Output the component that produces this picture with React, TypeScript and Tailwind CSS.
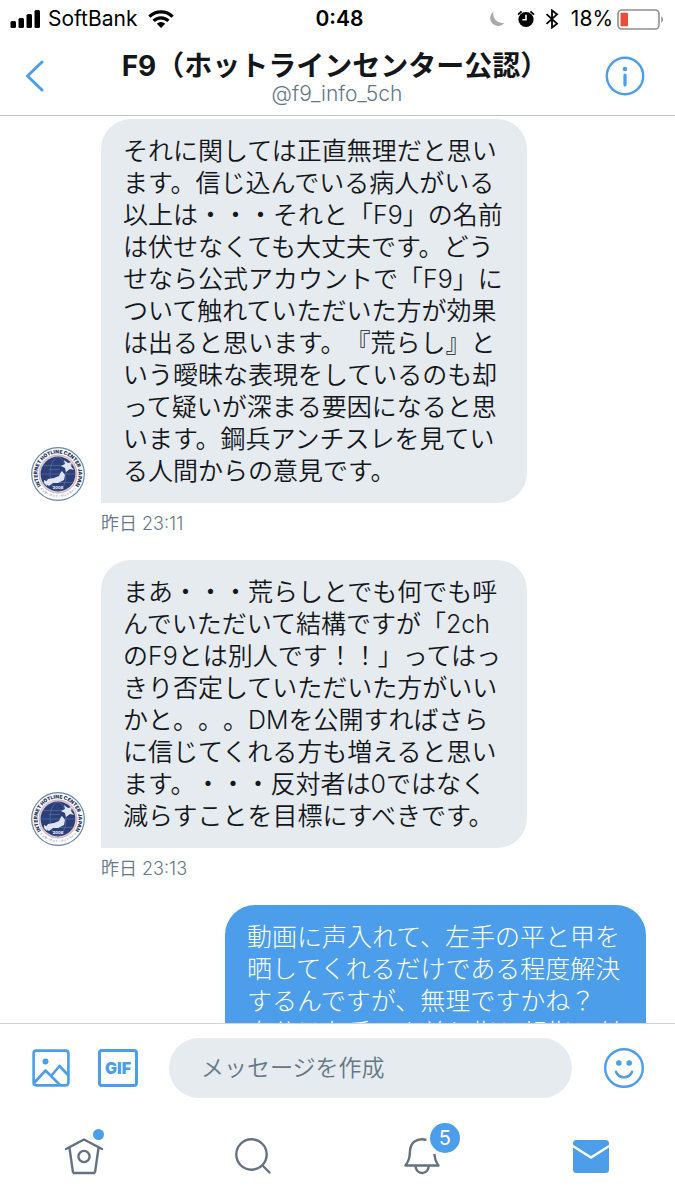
import { useId, useState } from "react";

type Message = {
  id: number;
  mine?: boolean;
  lines: string[];
  time: string;
};

const messages: Message[] = [
  {
    id: 1,
    lines: [
      "それに関しては正直無理だと思い",
      "ます。信じ込んでいる病人がいる",
      "以上は・・・それと「F9」の名前",
      "は伏せなくても大丈夫です。どう",
      "せなら公式アカウントで「F9」に",
      "ついて触れていただいた方が効果",
      "は出ると思います。『荒らし』と",
      "いう曖昧な表現をしているのも却",
      "って疑いが深まる要因になると思",
      "います。鋼兵アンチスレを見てい",
      "る人間からの意見です。",
    ],
    time: "昨日 23:11",
  },
  {
    id: 2,
    lines: [
      "まあ・・・荒らしとでも何でも呼",
      "んでいただいて結構ですが「2ch",
      "のF9とは別人です！！」ってはっ",
      "きり否定していただいた方がいい",
      "かと。。。DMを公開すればさら",
      "に信じてくれる方も増えると思い",
      "ます。・・・反対者は0ではなく",
      "減らすことを目標にすべきです。",
    ],
    time: "昨日 23:13",
  },
  {
    id: 3,
    mine: true,
    lines: [
      "動画に声入れて、左手の平と甲を",
      "晒してくれるだけである程度解決",
      "するんですが、無理ですかね？",
      "自分は左手の人差し指と親指の付",
    ],
    time: "昨日 23:15",
  },
];

const StatusBar = () => (
  <div className="grid h-9 shrink-0 grid-cols-[1fr_auto_1fr] items-center px-[10px] pt-[2px] text-black">
    <div className="flex items-center gap-[7px]">
      <svg className="h-[18px] w-[31px]" viewBox="0 0 31 18" fill="currentColor">
        <rect x="0.5" y="11" width="5.5" height="7" rx="1.5" />
        <rect x="8.5" y="8" width="5.5" height="10" rx="1.5" />
        <rect x="16.5" y="4" width="5.5" height="14" rx="1.5" />
        <rect x="24.5" y="0" width="5.5" height="18" rx="1.5" />
      </svg>
      <span className="text-[21px] leading-6">SoftBank</span>
      <svg className="ml-1 h-[18px] w-[26px]" viewBox="0 0 26 18">
        <g fill="none" stroke="currentColor" strokeWidth="3.2">
          <path d="M1.4 6.6a16.4 16.4 0 0 1 23.2 0" />
          <path d="M5.6 10.9a10.4 10.4 0 0 1 14.8 0" />
        </g>
        <path d="M13 18l-4.2-4.3a6 6 0 0 1 8.4 0z" fill="currentColor" />
      </svg>
    </div>
    <span className="pl-1 text-[21px] leading-6 font-semibold">0:48</span>
    <div className="flex items-center justify-end">
      <svg className="mr-3 h-4 w-4" viewBox="0 0 16 16" fill="#aaaaaa">
        <path d="M4.6 0.4a9 9 0 0 0 11 11.3A8 8 0 1 1 4.6 0.4z" />
      </svg>
      <svg className="mr-[10px] h-[18px] w-[18px]" viewBox="0 0 18 18">
        <circle cx="9" cy="9.5" r="7.6" />
        <path d="M1 4.6L4.6 1.4M17 4.6L13.4 1.4" stroke="#000" strokeWidth="1.8" />
        <path d="M9 4.8v5H5.4" fill="none" stroke="#fff" strokeWidth="1.6" />
      </svg>
      <svg className="mr-3 h-5 w-[14px]" viewBox="0 0 14 20" fill="none" stroke="#000" strokeWidth="1.8">
        <path d="M1.5 5.2L12 14.6L7 18.6V1.4L12 5.4L1.5 14.8" />
      </svg>
      <span className="mr-1 text-[21px] leading-6">18%</span>
      <svg className="h-[21px] w-12" viewBox="0 0 48 21">
        <rect x="1" y="1" width="41" height="19" rx="4" fill="none" stroke="#8e8e8e" strokeWidth="1.6" />
        <rect x="3.5" y="3.8" width="7.5" height="13.4" rx="1" fill="#f04b37" />
        <path d="M44.3 7.2a4 4 0 0 1 0 6.6z" fill="#8e8e8e" />
      </svg>
    </div>
  </div>
);

const ChatHeader = () => (
  <header className="grid h-20 shrink-0 grid-cols-[1fr_auto_1fr] items-center border-b border-[#b9c3cc] pr-[30px] pl-[25px]">
    <button type="button" aria-label="戻る" className="w-5 text-[#4c9eeb]">
      <svg className="h-8 w-5" viewBox="0 0 20 32" fill="none" stroke="currentColor" strokeWidth="3" strokeLinecap="round" strokeLinejoin="round">
        <path d="M17 2L2.5 16L17 30" />
      </svg>
    </button>
    <div className="pt-1 text-center">
      <h1 className="text-[28px] leading-8 font-bold whitespace-nowrap text-[#14171a]">
        F9（ホットラインセンター公認）
      </h1>
      <p className="pl-1 text-[21px] leading-6 font-[350] text-[#657786]">@f9_info_5ch</p>
    </div>
    <button type="button" aria-label="情報" className="justify-self-end text-[#4c9eeb]">
      <svg className="h-10 w-10" viewBox="0 0 40 40" fill="none" stroke="currentColor">
        <circle cx="20" cy="20" r="18.2" strokeWidth="2.4" />
        <circle cx="20" cy="13" r="2.3" fill="currentColor" stroke="none" />
        <path d="M20 19v10" strokeWidth="3.2" strokeLinecap="round" />
      </svg>
    </button>
  </header>
);

const Avatar = () => {
  const id = useId();

  return (
    <svg className="mb-[2px] h-[54px] w-[54px] shrink-0 overflow-visible" viewBox="0 0 54 54" role="img" aria-label="F9">
      <defs>
        <path id={`${id}-top`} d="M11 40A20.6 20.6 0 1 1 43 40" />
        <path id={`${id}-bottom`} d="M7 39.5A24 24 0 0 0 47 39.5" />
      </defs>
      <circle cx="27" cy="27" r="26.3" fill="#fdfdfe" stroke="#6d84a3" strokeWidth="1.2" />
      <circle cx="27" cy="27" r="19" fill="#e9cfd6" stroke="#b9a3b8" strokeWidth="0.8" />
      <circle cx="27" cy="27" r="17.4" fill="#2b4079" />
      <g fill="none" stroke="#5a6fa3" strokeWidth="0.7">
        <ellipse cx="27" cy="27" rx="8" ry="17" />
        <path d="M10 27h34M12.5 18.5h29M12.5 35.5h29M18 22.5h11" />
      </g>
      <g fill="#dfe6f1">
        <path d="M33 13l4 3 4-1-1 4 3 4-4-1-4 3-1-4-4-2 4-2z" />
        <path d="M31 24l3 4-1 5-6 3-5 0-4 3-4-3 3-4 6-1 5-2 2-4z" />
        <path d="M13 33l4 2-1 4-3-3z" />
      </g>
      <text fill="#fff" fontSize="4" fontWeight="700" x="27" y="42" textAnchor="middle">
        2006
      </text>
      <text fill="#29375e" fontSize="5" fontWeight="900">
        <textPath href={`#${id}-top`} startOffset="50%" textAnchor="middle">
          INTERNET HOTLINE CENTER JAPAN
        </textPath>
      </text>
      <text fill="#6a6d85" fontSize="3">
        <textPath href={`#${id}-bottom`} startOffset="50%" textAnchor="middle">
          インターネット・ホットライン
        </textPath>
      </text>
    </svg>
  );
};

const MessageItem = ({ message }: { message: Message }) => {
  if (message.mine) {
    return (
      <li className="flex flex-col items-end pr-[29px]">
        <p
          className="rounded-[30px] rounded-br-none bg-[#4c9eeb] py-4 pr-6 pl-[22px] text-[25px] leading-8
            font-light whitespace-pre text-white [text-spacing-trim:space-all]"
        >
          {message.lines.join("\n")}
        </p>
        <time className="pt-[10px] text-[18px] leading-[22px] text-[#657786]">{message.time}</time>
      </li>
    );
  }

  return (
    <li className="pb-[25px] pl-[31px]">
      <div className="flex items-end gap-4">
        <Avatar />
        <p
          className="w-[426px] rounded-[30px] rounded-bl-none bg-[#e6ebf0] px-[22px] py-4 text-[25px]
            leading-8 font-[350] whitespace-pre text-[#14171a] [text-spacing-trim:space-all]"
        >
          {message.lines.join("\n")}
        </p>
      </div>
      <time className="block pt-[10px] pl-[70px] text-[18px] leading-[22px] font-[350] text-[#657786]">
        {message.time}
      </time>
    </li>
  );
};

const Composer = () => {
  const [text, setText] = useState("");

  return (
    <form
      className="flex h-[89px] shrink-0 items-center border-t border-[#cdd3d8] pr-[31px] pl-8 text-[#4c9eeb]"
      onSubmit={(e) => e.preventDefault()}
    >
      <button type="button" aria-label="画像を追加" className="mr-7">
        <svg className="h-[38px] w-[38px]" viewBox="0 0 38 38" fill="none" stroke="currentColor" strokeWidth="2.6" strokeLinejoin="round">
          <rect x="1.6" y="1.6" width="34.8" height="34.8" rx="2.8" />
          <circle cx="13.5" cy="12.5" r="3" fill="currentColor" stroke="none" />
          <path d="M2 34L13.5 21.5L28 36M19.5 26.5L27.5 17L36.5 26.5" />
        </svg>
      </button>
      <button
        type="button"
        className="mr-[31px] flex h-[38px] w-10 items-center justify-center rounded-[4px] border-[3px]
          border-[#4c9eeb] text-[16px] leading-4 font-black"
      >
        GIF
      </button>
      <input
        type="text"
        aria-label="メッセージを作成"
        placeholder="メッセージを作成"
        value={text}
        onChange={(e) => setText(e.target.value)}
        className="h-[60px] min-w-0 flex-1 rounded-full bg-[#e6ebf0] px-8 text-[23px] font-[350]
          text-[#14171a] outline-none placeholder:text-[#657786]"
      />
      <button type="button" aria-label="絵文字" className="ml-8">
        <svg className="h-10 w-10" viewBox="0 0 40 40" fill="none" stroke="currentColor">
          <circle cx="20" cy="20" r="18.8" strokeWidth="2.4" />
          <circle cx="14.8" cy="15" r="2.8" fill="currentColor" stroke="none" />
          <circle cx="25.2" cy="15" r="2.8" fill="currentColor" stroke="none" />
          <path d="M12 23.8a8.6 8.6 0 0 0 16 0" strokeWidth="2.6" strokeLinecap="round" />
        </svg>
      </button>
    </form>
  );
};

const TabBar = () => (
  <nav className="grid h-[88px] shrink-0 grid-cols-4 items-center justify-items-center text-[#657180]">
    <a href="#home" aria-label="ホーム" className="relative">
      <svg className="h-10 w-10" viewBox="0 0 40 40" fill="none" stroke="currentColor" strokeWidth="2.4" strokeLinecap="round" strokeLinejoin="round">
        <path d="M2 13L20 3.5L38 13" />
        <path d="M5.5 12L8.8 35.2Q9.1 37 11 37H29Q30.9 37 31.2 35.2L34.5 12" />
        <circle cx="20" cy="20.5" r="5.6" />
      </svg>
      <span className="absolute -top-[7px] left-[29px] h-[11px] w-[11px] rounded-full bg-[#4c9eeb]" />
    </a>
    <a href="#search" aria-label="検索">
      <svg className="h-10 w-10" viewBox="0 0 40 40" fill="none" stroke="currentColor" strokeWidth="2.4" strokeLinecap="round">
        <circle cx="18.5" cy="18.5" r="15.2" />
        <path d="M29.5 29.5L36.5 36.5" />
      </svg>
    </a>
    <a href="#notifications" aria-label="通知" className="relative">
      <svg className="h-10 w-10" viewBox="0 0 40 40" fill="none" stroke="currentColor" strokeWidth="2.4" strokeLinejoin="round">
        <path d="M24.5 3.8C14 1.5 8.5 7 8 15C7.6 22 7 24.5 3.5 29.5H36.5C33.5 25.5 32.8 23 32.4 18" />
        <path d="M13.5 30a6.6 7 0 0 0 13.2 0" />
      </svg>
      <span
        className="absolute -top-[13px] left-[28px] flex h-[30px] w-[30px] items-center justify-center
          rounded-full bg-[#4c9eeb] text-[20px] leading-6 text-white"
      >
        5
      </span>
    </a>
    <a href="#messages" aria-label="メッセージ" className="text-[#4c9eeb]">
      <svg className="h-9 w-9" viewBox="0 0 36 36">
        <rect x="0" y="2" width="36" height="33" rx="3.5" fill="currentColor" />
        <path d="M-1 7.5L18 19.5L37 7.5" fill="none" stroke="#fff" strokeWidth="2.4" />
      </svg>
    </a>
  </nav>
);

export default function App() {
  return (
    <div className="flex h-screen flex-col bg-white font-['Inter','Noto_Sans_CJK_JP',sans-serif]" lang="ja">
      <StatusBar />
      <ChatHeader />
      <main className="min-h-0 flex-1 overflow-hidden pt-[3px]">
        <ul>
          {messages.map((m) => (
            <MessageItem key={m.id} message={m} />
          ))}
        </ul>
      </main>
      <Composer />
      <TabBar />
    </div>
  );
}
